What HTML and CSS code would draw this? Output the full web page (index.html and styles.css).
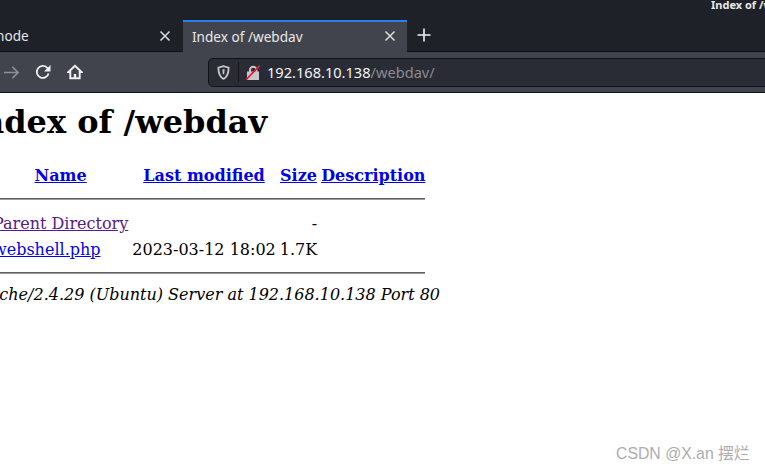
FILE: index.html
```html
<!DOCTYPE html>
<html lang="en">
<head>
<meta charset="utf-8">
<title>Index of /webdav</title>
<link rel="stylesheet" href="styles.css">
</head>
<body>
<header class="chrome">
  <div class="titlebar"><span class="wintitle">Index of /webdav — Mozilla Firefox</span></div>
  <div class="tabstrip">
    <div class="tab tab-inactive"><span class="tab-label tab-label-cut">node</span>
      <svg class="tab-close" viewBox="0 0 12 12"><path d="M1.5 1.5l9 9M10.5 1.5l-9 9"/></svg></div>
    <div class="tab tab-active"><span class="tab-label">Index of /webdav</span>
      <svg class="tab-close" viewBox="0 0 12 12"><path d="M1.5 1.5l9 9M10.5 1.5l-9 9"/></svg></div>
    <svg class="newtab" viewBox="0 0 14 14"><path d="M7 0.5v13M0.5 7h13"/></svg>
  </div>
  <div class="toolbar">
    <svg class="tb-icon tb-forward" viewBox="0 0 18 16"><path d="M1 8h15M10 2l6 6-6 6"/></svg>
    <svg class="tb-icon tb-reload" viewBox="0 0 16 16"><path d="M13.6 9.500A6 6 0 1 1 12 3.600L14 5.600"/><path class="fill" d="M15.500 1v6.500H9z"/></svg>
    <svg class="tb-icon tb-home" viewBox="0 0 16 16"><path d="M8 1.800L1.500 8h1.800v6.300h9.400V8h1.800z"/><path class="fill" d="M6.800 10h2.400v4.500H6.800z"/></svg>
    <div class="urlbar">
      <svg class="shield" viewBox="0 0 14 16"><path d="M7 1.200L1.500 2.800c0 6 1 9.800 5.500 12 4.500-2.200 5.500-6 5.500-12z"/><path class="fill" d="M5.800 4.500h2.400l-.4 5.500H6.200z"/></svg>
      <span class="urlsep"></span>
      <svg class="lock" viewBox="0 0 14 15"><path class="lockbody" d="M1 6.500h2V5a4.200 4.200 0 0 1 8.400 0v1.500H13V15H1zM5 6.500h4.400V5a2.200 2.200 0 0 0-4.400 0z"/><path class="strike" d="M0.300 14.300L13.700 0.700"/></svg>
      <span class="url"><span class="host">192.168.10.138</span><span class="path">/webdav/</span></span>
    </div>
  </div>
</header>
<main class="page">
  <h1>Index of /webdav</h1>
  <table>
    <tr><th class="c-icon"></th><th class="c-name"><a href="#">Name</a></th><th class="c-date"><a href="#">Last modified</a></th><th class="c-size"><a href="#">Size</a></th><th><a href="#">Description</a></th></tr>
    <tr><th colspan="5"><hr class="rule-top"></th></tr>
    <tr><td></td><td><a class="visited" href="#">Parent Directory</a></td><td></td><td class="right">-</td><td></td></tr>
    <tr><td></td><td><a href="#">webshell.php</a></td><td class="right">2023-03-12 18:02</td><td class="right">1.7K</td><td></td></tr>
    <tr><th colspan="5"><hr class="rule-bottom"></th></tr>
  </table>
  <address>Apache/2.4.29 (Ubuntu) Server at 192.168.10.138 Port 80</address>
</main>
<div class="watermark">CSDN @X.an 摆烂</div>
</body>
</html>
```
FILE: styles.css
```css
html, body { margin: 0; padding: 0; }
body { width: 765px; height: 472px; overflow: hidden; position: relative; background: #fff; font-family: "DejaVu Serif", serif; font-size: 16px; color: #000; }
.chrome { font-family: "Noto Sans", sans-serif; background: #1f2129; }
.titlebar { height: 20px; overflow: hidden; white-space: nowrap; padding-left: 711px; box-sizing: border-box; }
.wintitle { display: block; font-size: 11px; font-weight: 700; line-height: 10px; color: #e8e8ea; }
.tabstrip { height: 32px; display: flex; align-items: stretch; border-bottom: 1px solid #0f1014; box-sizing: border-box; }
.tab { display: flex; align-items: center; justify-content: space-between; box-sizing: border-box; color: #f0f0f2; font-size: 13.6px; }
.tab-inactive { width: 183px; padding-right: 12px; background: #1f2129; }
.tab-label-cut { margin-left: -4px; color: #e4e4e6; }
.tab-active { width: 224px; margin-bottom: -1px; background: #42444d; border-top: 2px solid #2a7fee; padding: 0 11px 2px 9px; color: #e8e8ea; }
.tab-close { width: 12px; height: 12px; fill: none; stroke: #dcdcde; stroke-width: 1.5; }
.newtab { width: 14px; height: 14px; margin: 8px 0 0 10px; fill: none; stroke: #f2f2f4; stroke-width: 1.6; }
.toolbar { height: 41px; background: #42444d; display: flex; align-items: center; border-bottom: 1px solid #0f1014; box-sizing: border-box; padding-left: 3px; }
.tb-icon { flex: none; fill: none; stroke: #f0f0f2; stroke-width: 1.8; }
.tb-forward { width: 17px; height: 15px; stroke: #8e8f95; }
.tb-reload { width: 16px; height: 16px; margin-left: 15px; }
.tb-reload .fill { fill: #f0f0f2; stroke: none; }
.tb-home { width: 16px; height: 16px; margin-left: 16px; stroke-width: 1.9; }
.tb-home .fill { fill: #f0f0f2; stroke: none; }
.urlbar { flex: none; margin-left: 125px; width: 600px; height: 29px; box-sizing: border-box; background: #2a2c35; border: 1px solid #121318; border-radius: 5px; display: flex; align-items: center; padding-left: 8px; }
.shield { width: 13px; height: 15px; flex: none; fill: none; stroke: #c4c4c7; stroke-width: 2; }
.shield .fill { fill: #c4c4c7; stroke: none; }
.urlsep { width: 1px; height: 20px; background: #15161b; margin: 0 7px 0 8px; flex: none; }
.lock { width: 14px; height: 15px; flex: none; }
.lockbody { fill: #c8c8cb; fill-rule: evenodd; }
.strike { stroke: #e8183c; stroke-width: 1.7; fill: none; }
.url { margin-left: 7px; font-size: 14.6px; white-space: nowrap; }
.host { color: #f2f2f4; }
.path { color: #8a8b91; }
.page { margin-left: -32px; }
h1 { margin: 10px 0 22px -2px; font-size: 32px; line-height: 38px; font-weight: 700; white-space: nowrap; }
table { border-collapse: separate; border-spacing: 2px; }
th, td { padding: 1px; line-height: 20px; white-space: nowrap; }
td { line-height: 22px; }
.c-icon { width: 18px; }
.c-name { text-align: center; }
td.right { text-align: right; }
hr { height: 0; border-width: 1px 0; border-style: solid; border-color: #5f5f5f #9a9a9a #9a9a9a; }
.rule-top { margin: 8px 0 9px; }
.rule-bottom { margin: 7px 0 8px; }
address { font-style: italic; white-space: nowrap; }
.visited { color: #551a8b; }
a { color: #0000ee; }
.watermark { position: absolute; left: 616px; top: 441px; font-family: "Liberation Sans", "Noto Sans CJK SC", sans-serif; font-size: 15.8px; color: #adadad; white-space: nowrap; }
```
